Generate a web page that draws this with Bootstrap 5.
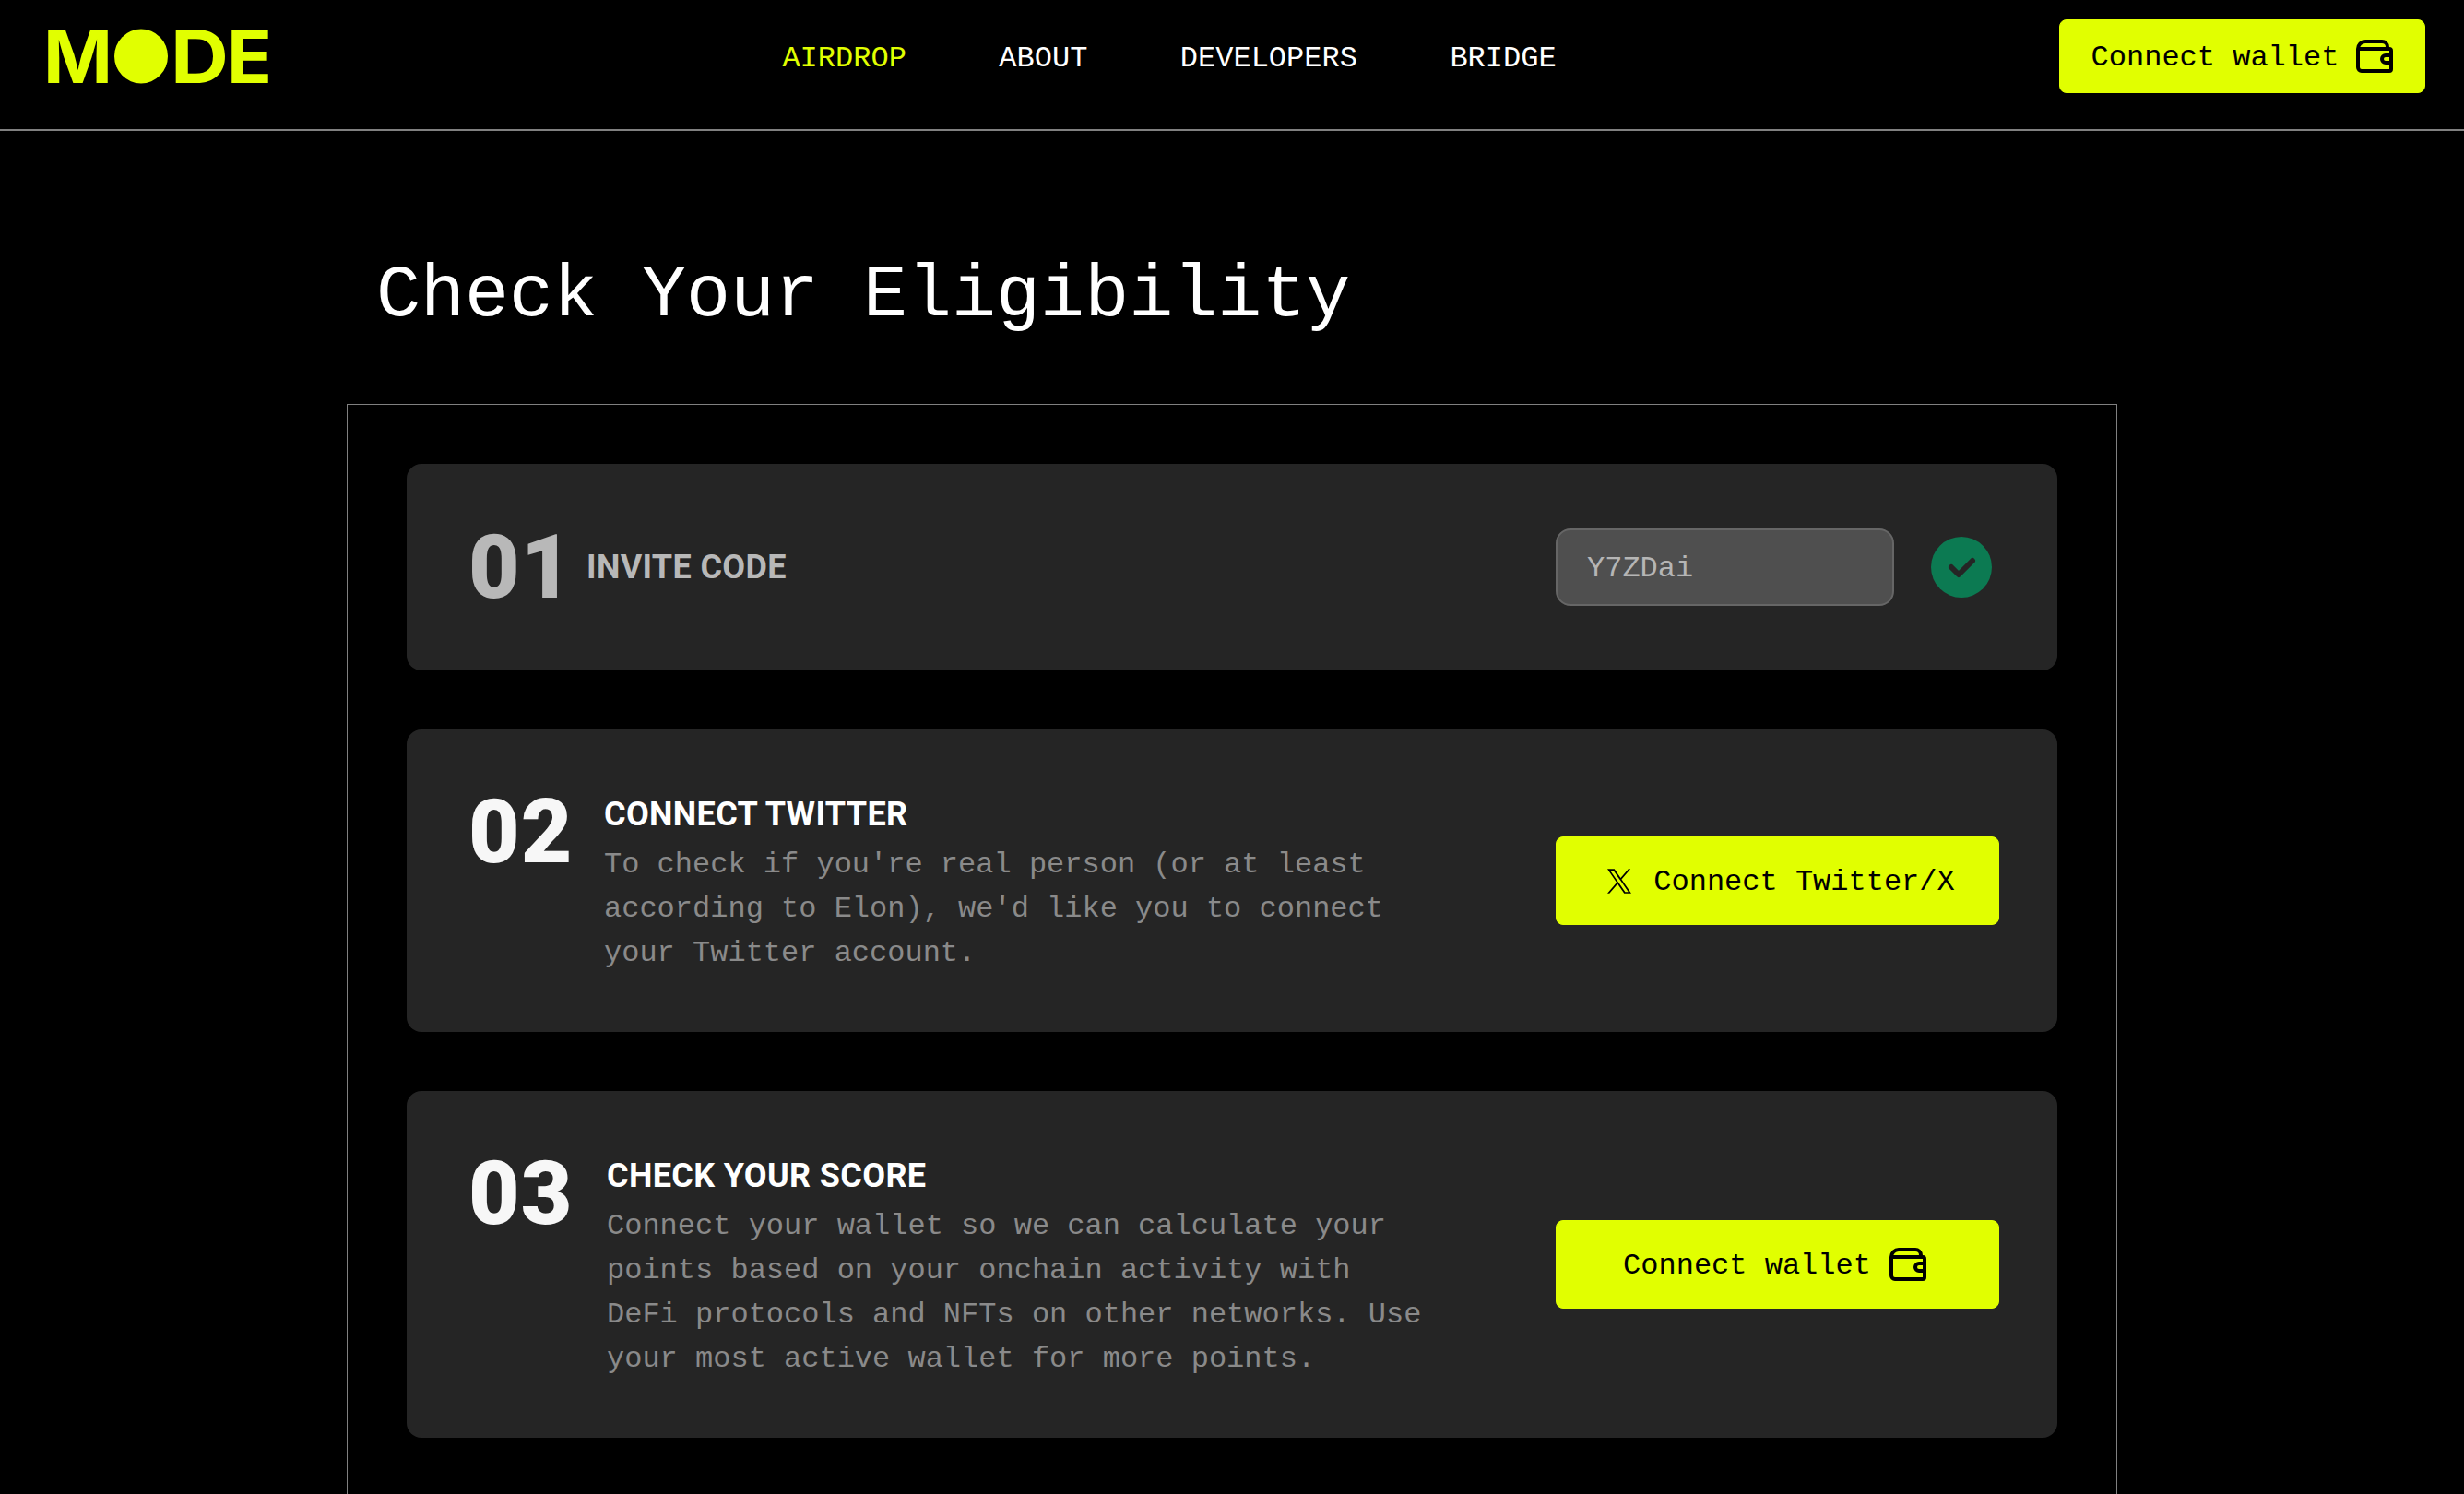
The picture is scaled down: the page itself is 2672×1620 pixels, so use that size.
<!DOCTYPE html>
<html lang="en">
<head>
<meta charset="UTF-8">
<meta name="viewport" content="width=device-width, initial-scale=1.0">
<title>Mode Airdrop</title>
<link rel="stylesheet" href="https://cdn.jsdelivr.net/npm/bootstrap@5.3.2/dist/css/bootstrap.min.css">
<style>
    html, body { height: 100%; overflow: hidden; }
    body {
        background-color: #000;
        color: #fff;
        font-family: "Liberation Mono", monospace;
        font-size: 32px;
    }
    .top-bar {
        height: 142px;
        padding: 0 42px 18px 41px;
        border-bottom: 2px solid #808080;
    }
    .logo-box { width: 262px; height: 100px; display: block; }
    .logo-box text { font-family: Inter, sans-serif; font-weight: 700; font-size: 80px; fill: #e1ff00; }
    .top-links { gap: 100.5px; }
    .top-links .nav-link { color: #fff; padding: 5px 0 0; font-size: 32px; }
    .top-links .nav-link.active { color: #e1ff00; }
    .btn-lime {
        --bs-btn-color: #000;
        --bs-btn-bg: #e1ff00;
        --bs-btn-border-color: #e1ff00;
        --bs-btn-hover-color: #000;
        --bs-btn-hover-bg: #cbe600;
        --bs-btn-hover-border-color: #cbe600;
        font-size: 32px;
        border-radius: 8px;
        display: flex;
        align-items: center;
        justify-content: center;
    }
    .btn-label { padding-top: 4px; }
    .btn-top { width: 397px; height: 80px; gap: 19px; }
    .btn-step { width: 481px; height: 96px; gap: 20px; }
    .btn-x { gap: 24px; padding-left: 20px; }
    .btn-wallet { padding-right: 18px; }
    .wallet-ico { width: 40px; height: 36px; fill: none; stroke: #000; stroke-width: 4; }
    .x-ico { width: 26px; height: 27px; fill: #000; }
    .page-wrap { width: 1920px; margin: 0 auto; }
    .page-title { font-family: "Liberation Mono", monospace; font-size: 80px; font-weight: 400; margin: 0; padding: 131px 32px 0; line-height: 96px; height: 296px; }
    .steps-box { border: 1px solid #808080; padding: 64px; height: 1400px; }
    .step-card { background: #252525; border-radius: 16px; padding: 64px 63px 64px 67px; margin-bottom: 64px; }
    .step-short { height: 224px; padding-top: 0; padding-bottom: 0; }
    .step-num { font-family: Roboto, sans-serif; font-weight: 900; font-size: 96px; line-height: 68px; margin-top: 13px; color: #f7f7f7; letter-spacing: 1px; flex: none; }
    .num-1 { width: 128px; }
    .num-2 { width: 147px; }
    .num-3 { width: 150px; }
    .step-title { font-family: Roboto, sans-serif; font-weight: 700; font-size: 36px; line-height: 56px; color: #fff; margin: 0; letter-spacing: .35px; }
    .step-text { color: #8a8a8a; line-height: 48px; max-width: 900px; margin: 3px 0 -3px; }
    .step-dim .step-num, .step-dim .step-title { color: #b8b8b8; margin-top: 0; }
    .code-field {
        width: 367px;
        height: 84px;
        background: #4f4f4f;
        border: 2px solid #666;
        border-radius: 16px;
        color: #b5b5b5;
        padding: 3px 32px 0;
        font-size: 32px;
        font-family: "Liberation Mono", monospace;
    }
    .code-field:disabled { background: #4f4f4f; color: #b5b5b5; }
    .ok-dot { width: 66px; height: 66px; margin-right: 8px; margin-left: 40px; }
</style>
</head>
<body>
<svg width="0" height="0" class="position-absolute">
    <symbol id="walletIcon" viewBox="0 0 40 36">
        <path d="M2 10v20a4 4 0 0 0 4 4h30a2 2 0 0 0 2-2V12a2 2 0 0 0-2-2H2"/>
        <path d="M2 10a8 8 0 0 1 8-8h18a6 6 0 0 1 6 6v2"/>
        <path d="M38 17h-6a4 4 0 0 0 0 8h6"/>
    </symbol>
</svg>

<nav class="top-bar d-flex align-items-center justify-content-between">
    <svg class="logo-box" viewBox="0 0 262 100">
        <text x="6" y="79" textLength="75" lengthAdjust="spacingAndGlyphs">M</text>
        <ellipse cx="112" cy="50" rx="29" ry="29.500" fill="#e1ff00"/>
        <text x="144" y="79" textLength="63" lengthAdjust="spacingAndGlyphs">D</text>
        <text x="205" y="79" textLength="49" lengthAdjust="spacingAndGlyphs">E</text>
    </svg>
    <ul class="nav top-links">
        <li class="nav-item"><a class="nav-link active" href="#">AIRDROP</a></li>
        <li class="nav-item"><a class="nav-link" href="#">ABOUT</a></li>
        <li class="nav-item"><a class="nav-link" href="#">DEVELOPERS</a></li>
        <li class="nav-item"><a class="nav-link" href="#">BRIDGE</a></li>
    </ul>
    <button type="button" class="btn btn-lime btn-top"><span class="btn-label">Connect wallet</span> <svg class="wallet-ico"><use href="#walletIcon"/></svg></button>
</nav>

<main class="page-wrap">
    <h1 class="page-title">Check Your Eligibility</h1>
    <div class="steps-box">

        <div class="step-card step-short step-dim d-flex align-items-center justify-content-between">
            <div class="d-flex align-items-center">
                <span class="step-num num-1">01</span>
                <h2 class="step-title">INVITE CODE</h2>
            </div>
            <div class="d-flex align-items-center">
                <input type="text" class="form-control code-field" value="Y7ZDai" disabled>
                <svg class="ok-dot" viewBox="0 0 66 66">
                    <circle cx="33" cy="33" r="33" fill="#0c7a52"/>
                    <path d="M22 33l8 8 15-15" fill="none" stroke="#252525" stroke-width="6" stroke-linecap="round" stroke-linejoin="round"/>
                </svg>
            </div>
        </div>

        <div class="step-card d-flex align-items-center justify-content-between">
            <div class="d-flex align-items-start">
                <span class="step-num num-2">02</span>
                <div>
                    <h2 class="step-title">CONNECT TWITTER</h2>
                    <p class="step-text">To check if you're real person (or at least according to Elon), we'd like you to connect your Twitter account.</p>
                </div>
            </div>
            <button type="button" class="btn btn-lime btn-step btn-x">
                <svg class="x-ico" viewBox="0 0 1200 1227"><path d="M714.163 519.284L1160.89 0H1055.03L667.137 450.887L357.328 0H0L468.492 681.821L0 1226.37H105.866L515.491 750.218L842.672 1226.37H1200L714.137 519.284H714.163ZM569.165 687.828L521.697 619.934L144.011 79.6944H306.615L611.412 515.685L658.88 583.579L1055.08 1150.3H892.476L569.165 687.854V687.828Z"/></svg>
                <span class="btn-label">Connect Twitter/X</span>
            </button>
        </div>

        <div class="step-card d-flex align-items-center justify-content-between">
            <div class="d-flex align-items-start">
                <span class="step-num num-3">03</span>
                <div>
                    <h2 class="step-title">CHECK YOUR SCORE</h2>
                    <p class="step-text">Connect your wallet so we can calculate your points based on your onchain activity with DeFi protocols and NFTs on other networks. Use your most active wallet for more points.</p>
                </div>
            </div>
            <button type="button" class="btn btn-lime btn-step btn-wallet"><span class="btn-label">Connect wallet</span> <svg class="wallet-ico"><use href="#walletIcon"/></svg></button>
        </div>

    </div>
</main>
<script src="https://cdn.jsdelivr.net/npm/bootstrap@5.3.2/dist/js/bootstrap.bundle.min.js"></script>
</body>
</html>
